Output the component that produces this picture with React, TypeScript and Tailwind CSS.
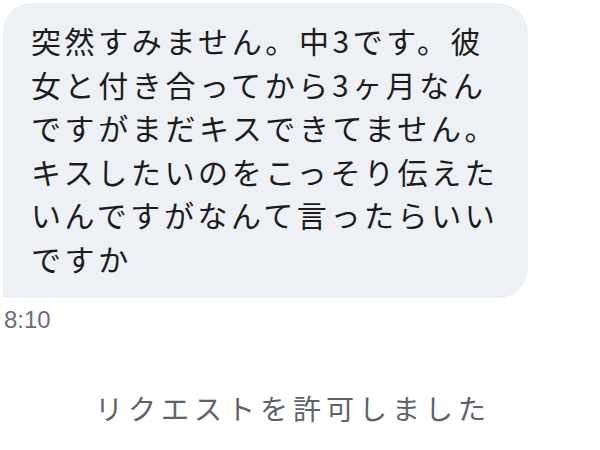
import React from "react";

const lines = [
  "突然すみません。中3です。彼",
  "女と付き合ってから3ヶ月なん",
  "ですがまだキスできてません。",
  "キスしたいのをこっそり伝えた",
  "いんですがなんて言ったらいい",
  "ですか",
];

export default function App() {
  return (
    <div
      className="w-[600px] h-[450px] bg-white flex flex-col overflow-hidden"
      style={{ fontFamily: '"Noto Sans CJK JP", "Noto Sans", sans-serif' }}
    >
      <div className="ml-[3px] mt-[3px] w-[525px] bg-[#edf0f4] rounded-tl-[28px] rounded-tr-[30px] rounded-br-[30px] rounded-bl-none pl-[28px] pt-[16px] pb-[18px]">
        {lines.map((l, i) => (
          <div
            key={i}
            className="whitespace-nowrap text-[30px] leading-[43.5px] tracking-[3.6px] text-[#1c1c1e]"
          >
            {l}
          </div>
        ))}
      </div>
      <div
        className="ml-[4px] mt-[8px] text-[24px] leading-[28px] text-[#6e6e73]"
        style={{ fontFamily: '"Liberation Sans", Arial, sans-serif' }}
      >
        8:10
      </div>
      <div className="mt-[54px] flex justify-center pr-[14px]">
        <div className="whitespace-nowrap text-[28px] leading-[40px] tracking-[5px] text-[#5f6368]">
          リクエストを許可しました
        </div>
      </div>
    </div>
  );
}
